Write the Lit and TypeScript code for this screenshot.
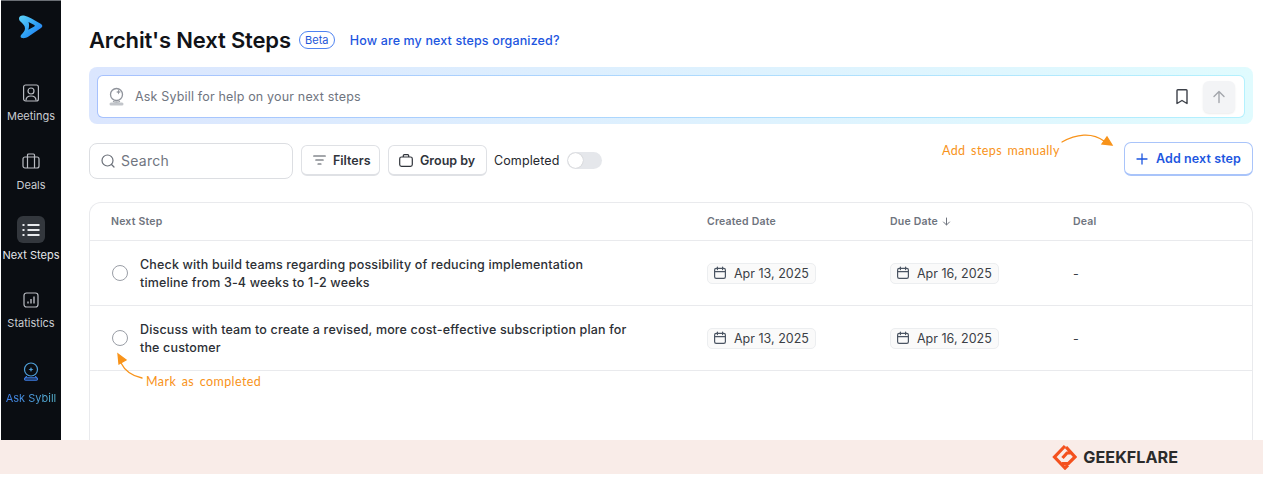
import { LitElement, html, css, svg } from "lit";
import { customElement } from "lit/decorators.js";

const cal = html`<svg class="cal" viewBox="0 0 14 14" width="14" height="14" fill="none" stroke="#4b5563" stroke-width="1.2" stroke-linecap="round"><rect x="1.6" y="2.4" width="10.8" height="10" rx="1.6"/><path d="M1.6 5.6h10.8M4.4 1v2.6M9.6 1v2.6"/></svg>`;

const rows = [
  ["Check with build teams regarding possibility of reducing implementation", "timeline from 3-4 weeks to 1-2 weeks"],
  ["Discuss with team to create a revised, more cost-effective subscription plan for", "the customer"],
];

@customElement("app-root")
export class AppRoot extends LitElement {
  static styles = css`
    :host { display: block; width: 1265px; height: 477px; overflow: hidden; background: #fff; font-family: Inter, "Liberation Sans", sans-serif; color: #111827; position: relative; }
    .app { display: flex; height: 440px; padding-left: 1px; box-sizing: border-box; overflow: hidden; }
    .side { width: 60px; flex: none; background: #0a0d12; border-top: 1px solid #6b6f75; box-sizing: border-box; display: flex; flex-direction: column; align-items: center; }
    .logo { margin-top: 14px; height: 24px; display: block; }
    .nav { display: flex; flex-direction: column; align-items: center; color: #c9ccd1; font-size: 11px; line-height: 14px; white-space: nowrap; }
    .nav svg { display: block; }
    .meet { margin-top: 45px; }
    .meet span { margin-top: 7px; }
    .deals { margin-top: 30px; }
    .deals span { margin-top: 9px; }
    .steps { margin-top: 24px; color: #e5e7eb; }
    .steps span { margin-top: 5px; }
    .stat { margin-top: 30px; }
    .stat span { margin-top: 8px; }
    .sybill { margin-top: 32px; }
    .sybill span { margin-top: 10px; color: transparent; background: linear-gradient(90deg, #3f7fe8, #57b4cf); -webkit-background-clip: text; background-clip: text; }
    .active { width: 28px; height: 27px; border-radius: 6px; background: #33373d; display: flex; align-items: center; justify-content: center; }
    main { flex: 1; min-width: 0; padding: 25px 12px 0 28px; box-sizing: border-box; }
    .head { display: flex; align-items: center; height: 30px; }
    h1 { margin: 0; font-size: 22px; line-height: 30px; font-weight: 600; letter-spacing: -.16px; color: #111318; }
    .beta { margin-left: 8px; width: 36px; height: 18px; box-sizing: border-box; border: 1px solid #4f83f1; border-radius: 9px; color: #1d56d8; font-size: 11px; display: flex; align-items: center; justify-content: center; }
    .how { margin-left: 15px; color: #1d56e0; font-size: 12.5px; font-weight: 500; letter-spacing: .13px; }
    .ask { margin-top: 12px; height: 57px; border-radius: 8px; padding: 8px; box-sizing: border-box; background: linear-gradient(90deg, #dbe6fe, #e0fbfe); }
    .ask-in { height: 43px; box-sizing: border-box; border-radius: 6px; background: linear-gradient(#fff, #fff) padding-box, linear-gradient(90deg, #a6c1fd, #b4f1fe) border-box; border: 1px solid transparent; display: flex; align-items: center; padding: 0 9px 0 10px; }
    .ask-in .ph { margin-left: 10px; flex: 1; color: #70757f; font-size: 12.5px; letter-spacing: .17px; }
    .send { width: 32px; height: 32px; margin-left: 14px; border-radius: 6px; background: #f3f4f6; box-shadow: 0 1px 2px rgba(0,0,0,.08); display: flex; align-items: center; justify-content: center; }
    .tools { display: flex; align-items: center; margin-top: 18px; height: 37px; }
    .search { width: 204px; height: 36px; box-sizing: border-box; border: 1px solid #dcdee2; border-radius: 8px; display: flex; align-items: center; padding-left: 11px; gap: 6px; color: #70757f; font-size: 14px; letter-spacing: .25px; }
    .btn { height: 31px; box-sizing: border-box; border: 1px solid #dfe1e5; border-bottom-width: 2px; border-radius: 6px; display: flex; align-items: center; font-size: 12.5px; font-weight: 600; color: #30343b; background: #fff; }
    .filters { width: 79px; margin-left: 8px; padding-left: 11px; gap: 7px; }
    .group { width: 99px; margin-left: 8px; padding-left: 10px; gap: 7px; }
    .comp { margin-left: 7px; font-size: 12.5px; color: #25282e; letter-spacing: .12px; }
    .toggle { margin-left: 7px; width: 35px; height: 17px; border-radius: 9px; background: #e5e7eb; position: relative; }
    .toggle::after { content: ""; position: absolute; left: 1px; top: 1px; width: 15px; height: 15px; border-radius: 50%; background: #fff; box-shadow: 0 0 1px rgba(0,0,0,.3); }
    .add { margin-left: auto; margin-top: -3px; width: 129px; height: 34px; box-sizing: border-box; border: 1px solid #a9c4fa; border-bottom: 2px solid #a9c4fa; border-radius: 7px; display: flex; align-items: center; padding-left: 11px; gap: 8px; color: #1d56e0; font-size: 12.5px; font-weight: 600; letter-spacing: .1px; }
    .table { margin-top: 23px; height: 260px; box-sizing: border-box; border: 1px solid #e9eaed; border-bottom: 0; border-radius: 12px 12px 0 0; }
    .row { display: grid; grid-template-columns: 617px 183px 183px 1fr; align-items: center; border-bottom: 1px solid #e9eaed; box-sizing: border-box; }
    .th { height: 38px; font-size: 10.5px; font-weight: 600; color: #6f747e; letter-spacing: .2px; }
    .th > div:first-child { padding-left: 21px; }
    .due { display: flex; align-items: center; gap: 4px; }
    .tr { height: 65px; font-size: 12.5px; color: #2c2f35; }
    .task { display: flex; align-items: center; padding-left: 22px; gap: 12px; font-weight: 500; letter-spacing: .16px; line-height: 18px; }
    .task-text { padding-top: 2px; }
    .radio { width: 14px; height: 14px; border: 1.5px solid #9a9ea6; border-radius: 50%; flex: none; }
    .pill { display: inline-flex; align-items: center; gap: 7px; width: 109px; height: 21px; box-sizing: border-box; border: 1px solid #eceef0; border-radius: 5px; background: #fafafa; padding-left: 5px; color: #3b3f46; }
    .dash { color: #3b3f46; }
    .note { position: absolute; color: #f8931a; font-family: Lato, "DejaVu Sans", sans-serif; font-size: 12.5px; white-space: nowrap; letter-spacing: .4px; word-spacing: 2px; }
    .n1 { left: 942px; top: 143px; }
    .n2 { left: 146px; top: 374px; }
    .arrow { position: absolute; left: 0; top: 0; pointer-events: none; }
    footer { height: 34px; width: 1263px; background: #f9ece8; display: flex; align-items: center; justify-content: flex-end; box-sizing: border-box; padding-right: 85px; gap: 6px; }
    .gf { font-weight: 700; font-size: 16.2px; color: #2b2b2b; }
  `;

  render() {
    const navStroke = "#b9bcc2";
    return html`
      <div class="app">
        <aside class="side">
          <svg class="logo" width="26" height="24" viewBox="0 0 26 24">
            <defs><linearGradient id="lg" x1="0" y1="0" x2="1" y2="1"><stop offset="0" stop-color="#5fd3f8"/><stop offset=".6" stop-color="#2b9cf5"/><stop offset="1" stop-color="#2f6df0"/></linearGradient></defs>
            <path fill="url(#lg)" fill-rule="evenodd" d="M1 3.500C1 1 3.500 0 6 .5c2.500.5 5 1.500 7.500 3l9.500 5.500c1.800 1.100 1.800 2.800 0 3.900L10.500 21.500c-2 1.300-4.500 2-6.500 1.500-1.800-.5-1.800-2 -.5-3.500 1.500-1.800 3.500-3.500 3.500-6 0-2.800-2-4.500-4-6.500C1.800 6.200 1 5 1 3.500zM10.500 7c.8 2 .8 5-.2 7.800l6-3.300c.6-.4.6-1 0-1.400z"/>
          </svg>
          <div class="nav meet">
            <svg width="18" height="18" viewBox="0 0 18 18" fill="none" stroke="${navStroke}" stroke-width="1.2"><rect x="1.600" y="1" width="14.800" height="16" rx="2"/><circle cx="9" cy="7" r="3"/><path d="M4 16.500c0-3 2-4.500 5-4.500s5 1.500 5 4.500"/></svg>
            <span>Meetings</span>
          </div>
          <div class="nav deals">
            <svg width="18" height="16" viewBox="0 0 18 16" fill="none" stroke="${navStroke}" stroke-width="1.200"><rect x="1" y="4" width="16" height="11" rx="2"/><path d="M5.500 4V2a1 1 0 0 1 1-1h5a1 1 0 0 1 1 1v2M5.500 4v11M12.500 4v11"/></svg>
            <span>Deals</span>
          </div>
          <div class="nav steps">
            <div class="active"><svg width="18" height="14" viewBox="0 0 18 14" fill="none" stroke="#e8eaed" stroke-width="2"><path d="M5.500 2h12M5.500 7h12M5.500 12h12M.500 2h2M.500 7h2M.500 12h2"/></svg></div>
            <span>Next Steps</span>
          </div>
          <div class="nav stat">
            <svg width="16" height="16" viewBox="0 0 16 16" fill="none" stroke="${navStroke}" stroke-width="1.200"><rect x="1" y="1" width="14" height="14" rx="2.500"/><path d="M5 11.500V9.500M8 11.500V7M11 11.500V4.500" stroke-width="1.400"/></svg>
            <span>Statistics</span>
          </div>
          <div class="nav sybill">
            <svg width="18" height="19" viewBox="0 0 18 19" fill="none" stroke="#4f9fd8" stroke-width="1.200"><circle cx="9" cy="7.500" r="6.500"/><path d="M9 5l.7 1.800 1.800.7-1.800.7L9 10l-.7-1.800-1.800-.7 1.800-.7z" fill="#4f9fd8" stroke="none"/><path d="M4.500 14c0 .8-.8 1.500-1.500 1.800M13.500 14c0 .8.8 1.500 1.500 1.800" stroke="#3f7fe8"/><rect x="2.500" y="15.800" width="13" height="2.400" rx="1.200" stroke="#3f7fe8"/></svg>
            <span>Ask Sybill</span>
          </div>
        </aside>
        <main>
          <div class="head">
            <h1>Archit's Next Steps</h1>
            <div class="beta">Beta</div>
            <div class="how">How are my next steps organized?</div>
          </div>
          <div class="ask">
            <div class="ask-in">
              <svg width="17" height="19" viewBox="0 0 17 19" fill="none" stroke="#8f939b" stroke-width="1.300"><circle cx="8.500" cy="7.500" r="6"/><path d="M10.500 2.500l.7 1.800 1.800.7-1.800.7-.7 1.800-.7-1.800-1.800-.7 1.800-.7z" fill="#8f939b" stroke="none"/><path d="M5 14.500c1 .5 2.500.6 3.500.6s2.500-.1 3.500-.6"/><rect x="1.500" y="15.500" width="14" height="3" rx="1.500" fill="#c2c5ca" stroke="none"/></svg>
              <span class="ph">Ask Sybill for help on your next steps</span>
              <svg width="14" height="16" viewBox="0 0 14 16" fill="none" stroke="#3d4149" stroke-width="1.400" stroke-linejoin="round"><path d="M2 1.500a.8.800 0 0 1 .8-.8h8.400a.8.800 0 0 1 .8.800v13l-5-3-5 3z"/></svg>
              <div class="send"><svg width="14" height="14" viewBox="0 0 14 14" fill="none" stroke="#a3a6ac" stroke-width="1.400" stroke-linecap="round" stroke-linejoin="round"><path d="M7 12.500V1.500M2 6.500l5-5 5 5"/></svg></div>
            </div>
          </div>
          <div class="tools">
            <div class="search">
              <svg width="14" height="14" viewBox="0 0 14 14" fill="none" stroke="#6b7079" stroke-width="1.200" stroke-linecap="round"><circle cx="6.500" cy="6.500" r="5.500"/><path d="M10.500 10.500L13 13"/></svg>
              <span>Search</span>
            </div>
            <div class="btn filters">
              <svg width="13" height="10" viewBox="0 0 13 10" fill="none" stroke="#4b5058" stroke-width="1.200" stroke-linecap="round"><path d="M.700 1h11.600M2.800 5h7.400M5 9h3"/></svg>
              <span>Filters</span>
            </div>
            <div class="btn group">
              <svg width="14" height="13" viewBox="0 0 14 13" fill="none" stroke="#30343b" stroke-width="1.200"><rect x=".700" y="3" width="12.600" height="9.300" rx="1.800"/><path d="M4.300 3V1.700a1 1 0 0 1 1-1h3.400a1 1 0 0 1 1 1V3"/></svg>
              <span>Group by</span>
            </div>
            <span class="comp">Completed</span>
            <div class="toggle"></div>
            <div class="add">
              <svg width="12" height="12" viewBox="0 0 12 12" fill="none" stroke="#1d56e0" stroke-width="1.300" stroke-linecap="round"><path d="M6 1v10M1 6h10"/></svg>
              <span>Add next step</span>
            </div>
          </div>
          <div class="table">
            <div class="row th">
              <div>Next Step</div><div>Created Date</div>
              <div class="due">Due Date <svg width="9" height="9" viewBox="0 0 9 9" fill="none" stroke="#6f747e" stroke-width="1" stroke-linecap="round" stroke-linejoin="round"><path d="M4.500 1v7M1.500 5l3 3 3-3"/></svg></div>
              <div>Deal</div>
            </div>
            ${rows.map(r => html`
              <div class="row tr">
                <div class="task"><div class="radio"></div><div class="task-text">${r[0]}<br>${r[1]}</div></div>
                <div><div class="pill">${cal}<span>Apr 13, 2025</span></div></div>
                <div><div class="pill">${cal}<span>Apr 16, 2025</span></div></div>
                <div class="dash">-</div>
              </div>`)}
          </div>
        </main>
      </div>
      <footer>
        <svg width="25" height="26" viewBox="0 0 25 26" fill="none" stroke="#f4511e" stroke-width="3.200"><path d="M13 2L2.500 13 13 24l3-3"/><path d="M14 3l9 10-6.500 6.500H10M10.500 14l4.500-5h4"/></svg>
        <span class="gf">GEEKFLARE</span>
      </footer>
      <span class="note n1">Add steps manually</span>
      <span class="note n2">Mark as completed</span>
      <svg class="arrow" width="1265" height="477" fill="none" stroke="#f8931a" stroke-width="1.300" stroke-linecap="round">
        ${svg`<path d="M1062 142c14-8 30-10 42-1"/><path d="M1112 145l-10-1 5-7z" fill="#f8931a"/>`}
        ${svg`<path d="M142 378c-10-2-17-7-21-15"/><path d="M118 354l8 6-7 4z" fill="#f8931a"/>`}
      </svg>
    `;
  }
}
